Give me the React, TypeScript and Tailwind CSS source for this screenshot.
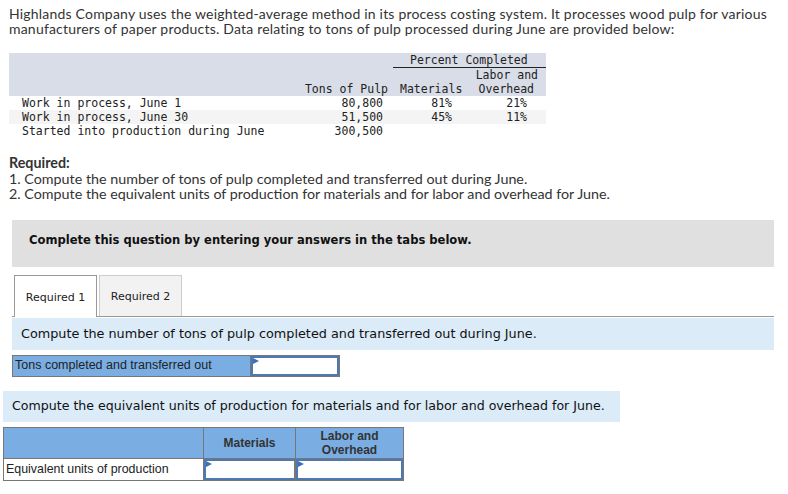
import React from "react";

const rows = [
  { label: "Work in process, June 1", tons: "80,800", mat: "81%", lab: "21%" },
  { label: "Work in process, June 30", tons: "51,500", mat: "45%", lab: "11%" },
  { label: "Started into production during June", tons: "300,500", mat: "", lab: "" },
];

const InputCell = ({ className }: { className: string }) => (
  <div className={`relative bg-white border-2 border-[#4d78b0] ${className}`}>
    <svg className="absolute left-0 top-0" width="6" height="6" viewBox="0 0 6 6">
      <path d="M0 0 L6 3 L0 6 Z" fill="#3b6fc0" />
    </svg>
  </div>
);

export default function App() {
  return (
    <div className="w-[788px] h-[494px] bg-white text-[#333] overflow-hidden">
      <p className="px-[9px] pt-[6px] text-[14px] tracking-[0.2px] leading-[15px] font-['Lato',sans-serif] text-[#333] whitespace-nowrap">
        Highlands Company uses the weighted-average method in its process costing system. It processes wood pulp for various
        <br />
        manufacturers of paper products. Data relating to tons of pulp processed during June are provided below:
      </p>

      <div className="ml-[9px] mt-[17px] w-[537px] font-['DejaVu_Sans_Mono',monospace] text-[11.5px] leading-[14px] text-[#222]">
        <div className="grid grid-cols-[291px_90px_80px_76px] bg-[#d9dde7] h-[43px]">
          <div className="row-span-3" />
          <div className="row-span-3 flex items-end justify-end pr-[2px]">Tons of Pulp</div>
          <div className="col-span-2 ml-[3px] h-[15px] border-b border-[#222] pl-[17px]">Percent Completed</div>
          <div className="row-span-2 flex items-end justify-start pl-[10px]">Materials</div>
          <div className="text-right pr-[8px]">Labor and</div>
          <div className="text-right pr-[12px]">Overhead</div>
        </div>
        {rows.map((r, i) => (
          <div
            key={r.label}
            className={`grid grid-cols-[291px_90px_80px_76px] h-[14px] ${i === 1 ? "bg-[#f4f4f4]" : "bg-white"}`}
          >
            <div className="pl-[13px] whitespace-nowrap">{r.label}</div>
            <div className="text-right pr-[7px]">{r.tons}</div>
            <div className="text-right pr-[18px]">{r.mat}</div>
            <div className="text-right pr-[19px]">{r.lab}</div>
          </div>
        ))}
      </div>

      <div className="mt-[17px] px-[9px] text-[14.3px] leading-[15.5px] font-['Lato',sans-serif] text-[#333] whitespace-nowrap">
        <div className="font-bold">Required:</div>
        <div>1. Compute the number of tons of pulp completed and transferred out during June.</div>
        <div>2. Compute the equivalent units of production for materials and for labor and overhead for June.</div>
      </div>

      <div className="mt-[18px] ml-[12px] w-[762px] h-[47px] bg-[#e0e0e0] pt-[13px] pl-[17px] font-['DejaVu_Sans',sans-serif] font-bold text-[11.55px] leading-[14px] text-[#111]">
        Complete this question by entering your answers in the tabs below.
      </div>

      <div className="mt-[8px] ml-[12px] w-[762px] font-['DejaVu_Sans',sans-serif]">
        <div className="flex items-end gap-[2px] pl-[2px] h-[42px] border-b border-[#999]">
          <div className="w-[83px] h-[42px] -mb-px pt-[4px] bg-white border border-b-0 border-[#999] flex items-center justify-center text-[11px] text-[#222]">
            Required 1
          </div>
          <div className="w-[83px] h-[41px] pt-[4px] bg-[#f2f2f2] border border-b-0 border-[#ccc] flex items-center justify-center text-[11px] text-[#222]">
            Required 2
          </div>
        </div>
        <div className="mt-px h-[32px] bg-[#dbebf8] flex items-center pl-[9px] text-[12.8px] text-[#111] whitespace-nowrap">
          Compute the number of tons of pulp completed and transferred out during June.
        </div>
        <div className="mt-[5px] flex h-[22px] w-[328px] border border-[#777] font-['Liberation_Sans',sans-serif] text-[12.5px]">
          <div className="w-[238px] bg-[#7aaee3] border-r border-[#777] flex items-center pl-[2px] text-[#222] whitespace-nowrap">
            Tons completed and transferred out
          </div>
          <InputCell className="flex-1" />
        </div>
      </div>

      <div className="mt-[14px] ml-[3px] w-[617px] h-[31px] bg-[#dbebf8] flex items-center pl-[9px] font-['DejaVu_Sans',sans-serif] text-[12.6px] text-[#111] whitespace-nowrap">
        Compute the equivalent units of production for materials and for labor and overhead for June.
      </div>

      <div className="mt-[5px] ml-[3px] w-[401px] border border-[#777] font-['Liberation_Sans',sans-serif] text-[12px] text-[#222]">
        <div className="flex h-[31px] bg-[#7aaee3] border-b border-[#777]">
          <div className="w-[200px] border-r border-[#777]" />
          <div className="w-[92px] border-r border-[#777] flex items-center justify-center font-bold text-[#333]">
            Materials
          </div>
          <div className="flex-1 flex items-center justify-center text-center font-bold leading-[14px] text-[#333]">
            Labor and
            <br />
            Overhead
          </div>
        </div>
        <div className="flex h-[21px]">
          <div className="w-[200px] border-r border-[#777] flex items-center pl-[2px] text-[12.4px] whitespace-nowrap">
            Equivalent units of production
          </div>
          <InputCell className="w-[92px] border-r-[#777]" />
          <InputCell className="flex-1" />
        </div>
      </div>
    </div>
  );
}
